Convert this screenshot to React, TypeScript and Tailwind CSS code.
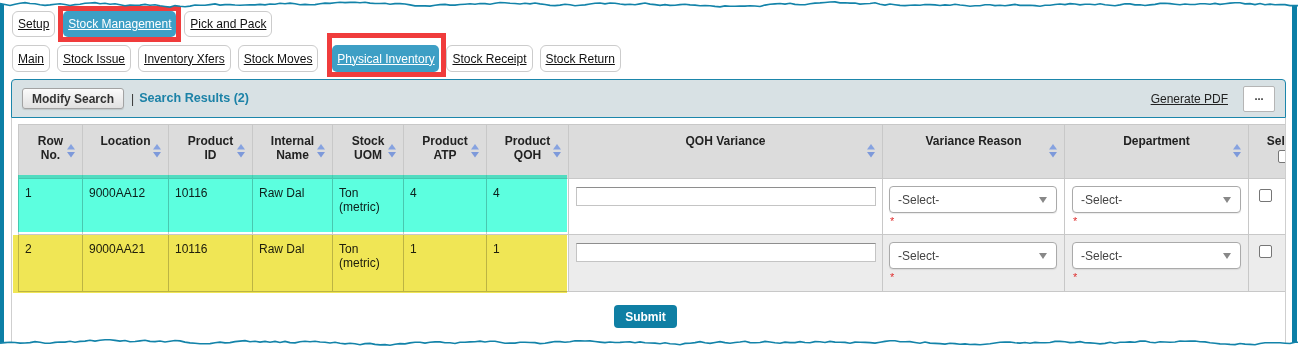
import React from "react";

/* ---------- helpers ---------- */

type TabDef = { label: string; active?: boolean; w?: string };

const topTabs: TabDef[] = [
  { label: "Setup" },
  { label: "Stock Management", active: true, w: "w-[113px]" },
  { label: "Pick and Pack" },
];

const subTabs: TabDef[] = [
  { label: "Main" },
  { label: "Stock Issue" },
  { label: "Inventory Xfers" },
  { label: "Stock Moves" },
  { label: "Physical Inventory", active: true, w: "w-[107px]" },
  { label: "Stock Receipt" },
  { label: "Stock Return" },
];

const columns = [
  { title: ["Row", "No."], w: "w-[64px]" },
  { title: ["Location"], w: "w-[86px]" },
  { title: ["Product", "ID"], w: "w-[84px]" },
  { title: ["Internal", "Name"], w: "w-[80px]" },
  { title: ["Stock", "UOM"], w: "w-[71px]" },
  { title: ["Product", "ATP"], w: "w-[83px]" },
  { title: ["Product", "QOH"], w: "w-[82px]" },
  { title: ["QOH Variance"], w: "w-[314px]" },
  { title: ["Variance Reason"], w: "w-[182px]" },
  { title: ["Department"], w: "w-[184px]" },
];

const rows = [
  ["1", "9000AA12", "10116", "Raw Dal", "Ton\n(metric)", "4", "4"],
  ["2", "9000AA21", "10116", "Raw Dal", "Ton\n(metric)", "1", "1"],
];

// jagged "torn paper" edge, seeded so it is stable between renders
function tornEdge(seed: number, base: number, amp: number) {
  let s = seed;
  const rnd = () => {
    s = (s * 16807) % 2147483647;
    return s / 2147483647;
  };
  const pts: [number, number][] = [];
  let y = base;
  for (let x = 0; x <= 1300; x += 5) {
    y += (rnd() - 0.5) * amp;
    y = y * 0.82 + base * 0.18;
    pts.push([x, Math.round(y * 10) / 10]);
  }
  return pts;
}

const topPts = tornEdge(12345, 4.5, 2.6);
const botPts = tornEdge(98765, 342.5, 2.8);
const line = (p: [number, number][]) => p.map(([x, y], i) => `${i ? "L" : "M"}${x} ${y}`).join(" ");

function SortArrows() {
  return (
    <svg width="8" height="14" viewBox="0 0 8 14" className="absolute right-[7px] top-[19px]">
      <path d="M4 0 L8 5.5 L0 5.5 Z" fill="#86a2e0" />
      <path d="M0 8 L8 8 L4 13.5 Z" fill="#7d99da" />
    </svg>
  );
}

function Tab({ t, sub }: { t: TabDef; sub?: boolean }) {
  return (
    <div
      className={
        t.active
          ? `${t.w} relative flex items-center justify-center rounded-[5px] bg-[#3d9fc5] text-white`
          : "relative flex items-center px-[5px] rounded-[6px] border border-[#cccccc] bg-white text-[#111111]"
      }
    >
      <span className="underline whitespace-nowrap">{t.label}</span>
      {t.active && !sub && (
        <div className="absolute -left-[5px] -top-[5px] -right-[5px] -bottom-[5px] border-[5px] border-[#f03c3c]" />
      )}
      {t.active && sub && (
        <div className="absolute -left-[5px] -top-[12px] -right-[7px] -bottom-[5px] border-[5px] border-[#f03c3c]" />
      )}
    </div>
  );
}

function SelectBox() {
  return (
    <div>
      <div className="flex items-center justify-between h-[27px] pl-[8px] pr-[9px] border border-[#aaaaaa] rounded-[4px] bg-white shadow-[0_1px_1px_rgba(0,0,0,0.08)]">
        <span className="text-[12px] text-[#444444]">-Select-</span>
        <svg width="8" height="6" viewBox="0 0 8 6">
          <path d="M0 0 L8 0 L4 6 Z" fill="#888888" />
        </svg>
      </div>
      <div className="text-[11px] leading-[10px] text-[#e03030] pl-[1px] pt-[3px]">*</div>
    </div>
  );
}

/* ---------- page ---------- */

export default function App() {
  return (
    <div className="relative w-[1298px] h-[350px] overflow-hidden bg-white font-['Liberation_Sans',Arial,sans-serif] text-[12px] text-[#222222]">
      <div className="flex h-full">
        <div className="w-[4px] bg-[#0c7fa6]" />
        <div className="w-[1288px] flex flex-col pl-[7px] pr-[6px] pt-[11px]">
          {/* tabs */}
          <div className="flex gap-[8px] h-[26px] pl-[1px]">
            {topTabs.map((t) => (
              <Tab key={t.label} t={t} />
            ))}
          </div>
          <div className="flex gap-[7px] h-[27px] mt-[8px] pl-[1px]">
            {subTabs.map((t) => (
              <div key={t.label} className={t.active ? "flex ml-[7px]" : "flex"}>
                <Tab t={t} sub />
              </div>
            ))}
          </div>

          {/* toolbar */}
          <div className="mt-[7px] h-[39px] flex items-center justify-between border border-[#1b86ab] rounded-t-[4px] bg-[#d8e1e4] pl-[10px] pr-[10px]">
            <div className="flex items-center">
              <button className="h-[21px] px-[9px] border border-[#a3a3a3] rounded-[3px] bg-gradient-to-b from-[#fbfbfb] to-[#e1e1e1] font-bold text-[12px] text-[#333333] shadow-[0_1px_1px_rgba(0,0,0,0.12)]">
                Modify Search
              </button>
              <span className="ml-[7px] text-[#333333]">|</span>
              <span className="ml-[5px] font-bold text-[12.6px] text-[#1c82a7]">Search Results (2)</span>
            </div>
            <div className="flex items-center">
              <span className="underline text-[#222222]">Generate PDF</span>
              <button className="ml-[15px] w-[32px] h-[26px] border border-[#b5b5b5] rounded-[2px] bg-white text-[11px] font-bold text-[#333333] leading-none pb-[4px]">
                ...
              </button>
            </div>
          </div>

          {/* results */}
          <div className="relative flex-1 flex flex-col border-x border-[#cfcfcf] overflow-hidden">
            <div className="pl-[6px] pt-[6px]">
              <table className="table-fixed border-collapse w-[1302px]">
                <thead>
                  <tr className="h-[54px] bg-[#dcdcdc]">
                    {columns.map((c) => (
                      <th
                        key={c.title.join(" ")}
                        className={`${c.w} relative align-top pt-[9px] border border-[#c8c8c8] font-bold text-[12px] leading-[14px] text-[#222222]`}
                      >
                        {c.title.map((l) => (
                          <div key={l}>{l}</div>
                        ))}
                        <SortArrows />
                      </th>
                    ))}
                    <th className="w-[72px] align-top pt-[9px] border border-[#c8c8c8] font-bold text-[12px] leading-[14px]">
                      <div>Select</div>
                      <div className="mx-auto mt-[2px] w-[13px] h-[13px] border border-[#767676] bg-white rounded-[2px]" />
                    </th>
                  </tr>
                </thead>
                <tbody>
                  {rows.map((r, ri) => (
                    <tr key={r[0]} className={ri === 0 ? "h-[56px] bg-white" : "h-[57px] bg-[#ececec]"}>
                      {r.map((v, ci) => (
                        <td key={ci} className="align-top bg-white pt-[7px] pl-[6px] border border-[#c8c8c8] leading-[14px] whitespace-pre-line">
                          {v}
                        </td>
                      ))}
                      <td className="align-top pt-[8px] pl-[7px] pr-[6px] border border-[#c8c8c8]">
                        <div className="h-[19px] border border-[#c4c4c4] border-t-[#8e8e8e] bg-white" />
                      </td>
                      <td className="align-top pt-[7px] pl-[6px] pr-[7px] border border-[#c8c8c8]">
                        <SelectBox />
                      </td>
                      <td className="align-top pt-[7px] pl-[7px] pr-[7px] border border-[#c8c8c8]">
                        <SelectBox />
                      </td>
                      <td className="align-top pt-[10px] pl-[10px] border border-[#c8c8c8]">
                        <div className="w-[13px] h-[13px] border border-[#767676] bg-white rounded-[2px]" />
                      </td>
                    </tr>
                  ))}
                </tbody>
              </table>
            </div>

            <div className="flex justify-center mt-[13px] pr-[6px]">
              <button className="w-[63px] h-[23px] rounded-[4px] bg-[#0f7fa4] text-white font-bold text-[12px]">
                Submit
              </button>
            </div>

            {/* annotation highlights */}
            <div className="absolute left-[6px] top-[57px] w-[549px] h-[57px] bg-[#5cffdf] mix-blend-multiply" />
            <div className="absolute left-[1px] top-[117px] w-[554px] h-[58px] bg-[#f0e655] mix-blend-multiply" />
          </div>
        </div>
        <div className="w-[5px] bg-[#0c7fa6]" />
      </div>

      {/* torn edges */}
      <svg className="absolute left-0 top-0" width="1298" height="350" viewBox="0 0 1298 350">
        <path d={`M0 0 ${line(topPts).replace(/^M/, "L")} L1300 0 Z`} fill="#ffffff" />
        <path d={line(topPts)} fill="none" stroke="#1383a9" strokeWidth="1.6" />
        <path d={`M0 350 ${line(botPts).replace(/^M/, "L")} L1300 350 Z`} fill="#ffffff" />
        <path d={line(botPts)} fill="none" stroke="#1383a9" strokeWidth="1.6" />
      </svg>
    </div>
  );
}
